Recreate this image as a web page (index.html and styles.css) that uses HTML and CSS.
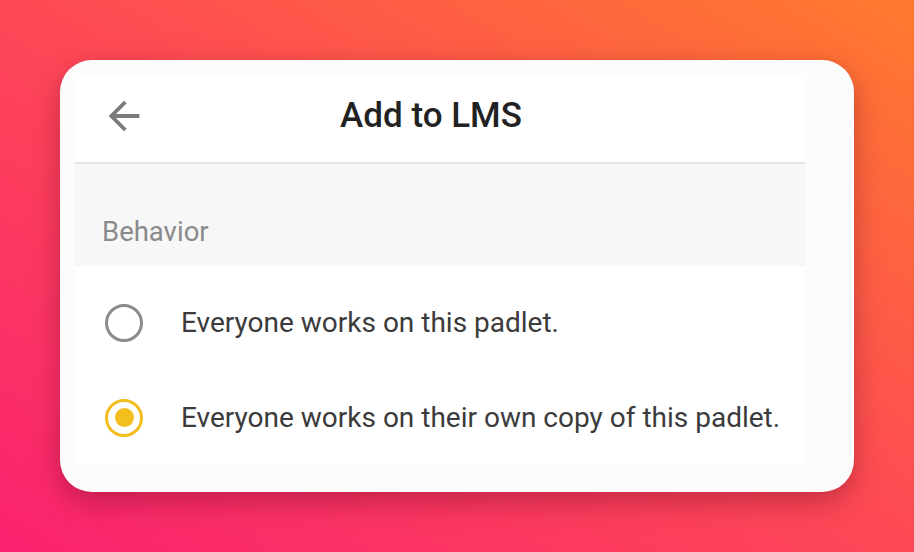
FILE: index.html
```html
<!DOCTYPE html>
<html lang="en">
<head>
  <meta charset="UTF-8" />
  <meta name="viewport" content="width=device-width, initial-scale=1.0" />
  <title>Add to LMS</title>
  <link rel="stylesheet" href="styles.css">
</head>
<body>
  <div class="card">
    <div class="panel">
      <div class="header">
        <button class="back" aria-label="Back">
          <svg width="46" height="46" viewBox="0 0 24 24"><path d="M20 11H7.83l5.59-5.59L12 4l-8 8 8 8 1.41-1.41L7.83 13H20v-2z" fill="#7b7b7b"/></svg>
        </button>
        <h1>Add to LMS</h1>
        <div></div>
      </div>

      <div class="section-title">Behavior</div>

      <div class="options">
        <label class="option">
          <span class="radio"></span>
          <span class="label">Everyone works on this padlet.</span>
        </label>
        <label class="option">
          <span class="radio checked"></span>
          <span class="label">Everyone works on their own copy of this padlet.</span>
        </label>
      </div>
    </div>
  </div>
</body>
</html>
```

FILE: styles.css
```css
body {
  margin: 0;
  padding: 60px;
  height: 552px;
  box-sizing: border-box;
  background: linear-gradient(to top right, #fa2270 0%, #fe4856 50%, #ff7a2e 100%);
  font-family: Roboto, 'Liberation Sans', sans-serif;
  overflow: hidden;
}
.card {
  width: 794px;
  height: 432px;
  box-sizing: border-box;
  padding: 16px 49px 28px 15px;
  background-color: #fcfcfc;
  border-radius: 32px;
  box-shadow: 0 10px 28px rgba(90, 0, 30, 0.35);
}
.panel {
  height: 388px;
  background-color: #fff;
  overflow: hidden;
}
.header {
  display: grid;
  grid-template-columns: 92px 1fr 110px;
  align-items: center;
  height: 88px;
  box-sizing: border-box;
  padding-bottom: 7px;
  border-bottom: 2px solid #e4e4e4;
}
.back {
  background: none;
  border: none;
  padding: 0 0 0 26px;
  display: flex;
  cursor: pointer;
}
h1 {
  margin: 0;
  font-size: 35px;
  line-height: 1;
  font-weight: 500;
  color: #222;
  text-align: center;
}
.section-title {
  height: 102px;
  box-sizing: border-box;
  padding: 54px 27px 0;
  background-color: #f7f7f7;
  font-size: 27.5px;
  line-height: 1;
  color: #8a8a8a;
}
.options {
  padding: 9px 0 0;
}
.option {
  display: flex;
  align-items: center;
  gap: 38px;
  height: 95px;
  padding-left: 30px;
  cursor: pointer;
}
.radio {
  width: 38px;
  height: 38px;
  box-sizing: border-box;
  border: 3.5px solid #8b8b8b;
  border-radius: 50%;
  display: flex;
  align-items: center;
  justify-content: center;
  flex-shrink: 0;
}
.radio.checked {
  border-color: #f3bf1e;
}
.radio.checked::after {
  content: "";
  width: 19px;
  height: 19px;
  border-radius: 50%;
  background-color: #f3bf1e;
}
.label {
  font-size: 28px;
  line-height: 1;
  color: #3b3b3b;
}
```
